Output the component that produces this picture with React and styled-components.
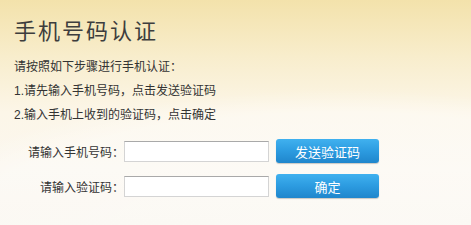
import React from 'react'
import styled, { createGlobalStyle } from 'styled-components'

const GlobalStyle = createGlobalStyle`
    html, body {
        margin: 0;
        padding: 0;
    }
    body {
        font-family: "Liberation Sans", "Noto Sans CJK SC", sans-serif;
        color: #333;
    }
`

const Page = styled.div`
    width: 471px;
    height: 225px;
    box-sizing: border-box;
    padding: 16px 0 0 14px;
    overflow: hidden;
    background:
        radial-gradient(ellipse 460px 150px at 340px 240px, rgba(255, 255, 255, 0.45) 0%, rgba(255, 255, 255, 0.35) 85%, rgba(255, 255, 255, 0) 100%),
        linear-gradient(180deg, #f3e2ab 0%, #f8edcc 25%, #fcf6e8 50%, #fbf7ef 75%, #f9f5ed 100%);
`

const Title = styled.h1`
    margin: 0;
    font-family: "Noto Sans CJK SC", sans-serif;
    font-size: 22px;
    line-height: 26px;
    font-weight: normal;
    letter-spacing: 2px;
    color: #3d3d3d;
`

const Steps = styled.div`
    margin-top: 13px;
    font-size: 12px;
    line-height: 24px;
    color: #333;
`

const Step = styled.p`
    margin: 0;
`

const Form = styled.div`
    margin-top: 12px;
    display: flex;
    flex-direction: column;
    gap: 11px;
`

const Row = styled.div`
    display: flex;
    align-items: center;
    height: 24px;
`

const Label = styled.label`
    width: 110px;
    text-align: right;
    font-size: 12px;
    color: #333;
`

const Input = styled.input`
    box-sizing: border-box;
    width: 145px;
    height: 21px;
    border: 1px solid #d4d4d4;
    border-top-color: #a9a9a9;
    background: #fff;
    outline: none;
    margin: 0;
    padding: 0 4px;
`

const Button = styled.button`
    box-sizing: border-box;
    margin-left: 7px;
    width: 103px;
    height: 24px;
    border: none;
    border-radius: 3px;
    background: linear-gradient(180deg, #40b1ef 0%, #2c9be0 50%, #1f86cc 100%);
    box-shadow: 0 1px 1px rgba(0, 0, 0, 0.2);
    color: #fff;
    font-family: "Noto Sans CJK SC", sans-serif;
    font-size: 13px;
    padding: 0;
    cursor: pointer;
`

export default function App() {
    return (
        <React.Fragment>
            <GlobalStyle/>
            <Page>
                <Title>手机号码认证</Title>
                <Steps>
                    <Step>请按照如下步骤进行手机认证：</Step>
                    <Step>1.请先输入手机号码，点击发送验证码</Step>
                    <Step>2.输入手机上收到的验证码，点击确定</Step>
                </Steps>
                <Form>
                    <Row>
                        <Label>请输入手机号码：</Label>
                        <Input type="text"/>
                        <Button>发送验证码</Button>
                    </Row>
                    <Row>
                        <Label>请输入验证码：</Label>
                        <Input type="text"/>
                        <Button>确定</Button>
                    </Row>
                </Form>
            </Page>
        </React.Fragment>
    )
}
